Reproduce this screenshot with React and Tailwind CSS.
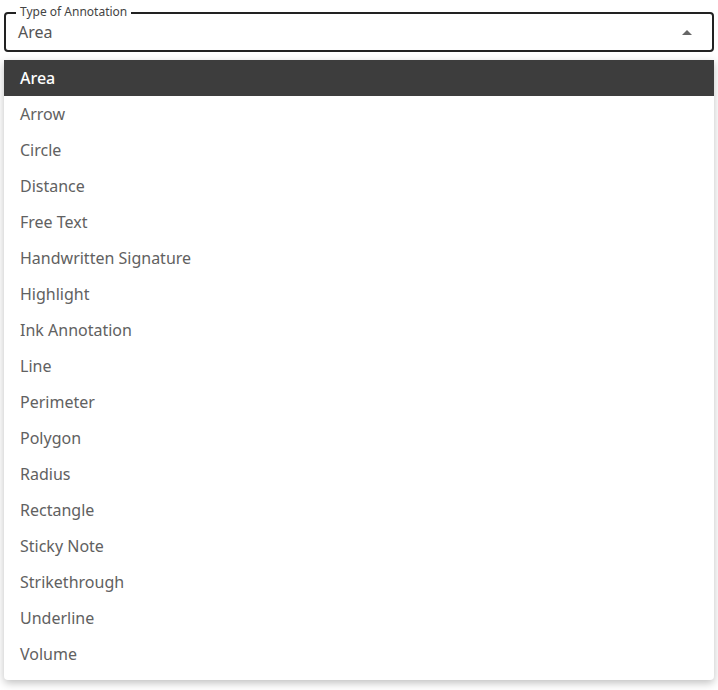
import React from "react";

const options = [
  "Area", "Arrow", "Circle", "Distance", "Free Text", "Handwritten Signature",
  "Highlight", "Ink Annotation", "Line", "Perimeter", "Polygon", "Radius",
  "Rectangle", "Sticky Note", "Strikethrough", "Underline", "Volume",
];

export default function App() {
  const selected = "Area";
  return (
    <div className="w-[718px] h-[690px] bg-white px-1 pt-3 font-['Roboto',sans-serif]">
      {/* select field */}
      <div className="relative h-10 border-2 border-[#222] rounded-[4px] flex items-center pl-[12px] pr-4">
        <span className="absolute -top-[9px] left-[10px] bg-white px-1 text-[12px] leading-[14px] text-[#444]">
          Type of Annotation
        </span>
        <span className="flex-1 text-[16px] text-[#555]">{selected}</span>
        <svg width="10" height="5" viewBox="0 0 10 5" className="mr-[4px]">
          <path d="M0 5 L5 0 L10 5 Z" fill="#666" />
        </svg>
      </div>

      {/* menu */}
      <ul className="mt-2 bg-white rounded-b-[4px] pb-2 shadow-[0_3px_8px_rgba(0,0,0,0.25)]">
        {options.map((opt) => (
          <li
            key={opt}
            className={
              opt === selected
                ? "h-9 flex items-center px-4 text-[16px] bg-[#3d3d3d] text-white font-medium"
                : "h-9 flex items-center px-4 text-[16px] text-[#616161]"
            }
          >
            {opt}
          </li>
        ))}
      </ul>
    </div>
  );
}
